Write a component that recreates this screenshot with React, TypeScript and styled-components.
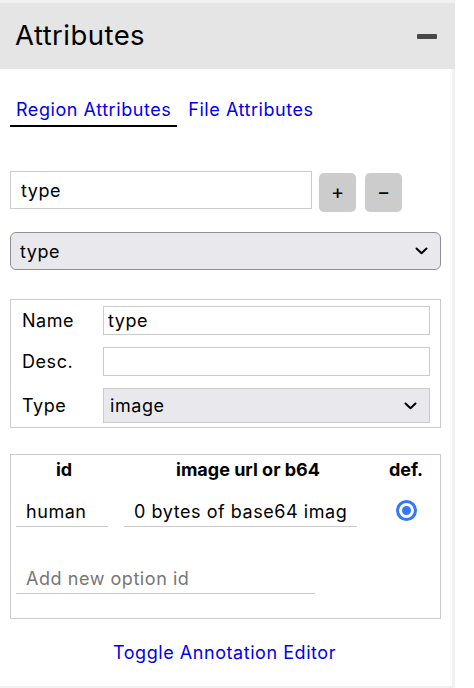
import React from "react";
import styled, { createGlobalStyle } from "styled-components";

const Global = createGlobalStyle`
  html, body { margin: 0; padding: 0; background: #fff; }
  body { font-family: Inter, "Liberation Sans", Arial, sans-serif; color: #000; letter-spacing: 0.55px; }
  * { box-sizing: border-box; }
`;

const fieldFont = `
  font: 18px Inter, "Liberation Sans", Arial, sans-serif;
  letter-spacing: 0.55px;
`;

const Panel = styled.div`
  width: 455px;
  height: 688px;
  background: #f1f1f1;
  padding-top: 3px;
  padding-bottom: 2px;
  display: flex;
  flex-direction: column;
`;

const Header = styled.div`
  height: 66px;
  flex: none;
  background: #e5e5e5;
  display: flex;
  align-items: center;
  justify-content: space-between;
  padding: 0 18px 0 15px;
`;

const Title = styled.h2`
  margin: 0;
  font-size: 27.5px;
  font-weight: 400;
  line-height: 1;
  letter-spacing: 0.45px;
`;

const Collapse = styled.button`
  width: 20px;
  height: 5px;
  padding: 0;
  border: 0;
  border-radius: 1px;
  background: #474747;
`;

const Body = styled.div`
  flex: 1;
  margin-right: 3px;
  background: #fff;
  padding: 0 11px 0 10px;
  display: flex;
  flex-direction: column;
`;

const Tabs = styled.div`
  margin-top: 30px;
  display: flex;
  gap: 5px;
`;

const Tab = styled.a<{ $active?: boolean }>`
  display: block;
  padding: 0 6px 4px;
  font-size: 18px;
  line-height: 22px;
  color: #0000ee;
  text-decoration: none;
  border-bottom: 2px solid ${(p) => (p.$active ? "#000" : "transparent")};
`;

const NewRow = styled.div`
  margin-top: 44px;
  display: flex;
  align-items: flex-start;
`;

const TextInput = styled.input<{ $w?: number; $h?: number; $pad?: number }>`
  width: ${(p) => (p.$w ? `${p.$w}px` : "100%")};
  height: ${(p) => p.$h ?? 38}px;
  border: 1px solid #cccccc;
  border-radius: 0;
  padding: 0 ${(p) => p.$pad ?? 10}px;
  ${fieldFont}
  color: #000;
  background: #fff;
  outline: none;
`;

const SmallButton = styled.button<{ $gap: number }>`
  width: 37px;
  height: 39px;
  margin-top: 2px;
  margin-left: ${(p) => p.$gap}px;
  border: 0;
  border-radius: 5px;
  background: #cccccc;
  font: 20px Inter, "Liberation Sans", Arial, sans-serif;
  color: #000;
  display: flex;
  align-items: center;
  justify-content: center;
  padding: 0 0 2px;
`;

const SelectBox = styled.div<{ $rounded?: boolean; $h: number; $pad: number }>`
  height: ${(p) => p.$h}px;
  display: flex;
  align-items: center;
  justify-content: space-between;
  padding: 0 12px 0 ${(p) => p.$pad}px;
  background: #e9e9ed;
  border: 1px solid ${(p) => (p.$rounded ? "#8f8f96" : "#cccccc")};
  border-radius: ${(p) => (p.$rounded ? "6px" : "0")};
  font-size: 18px;
`;

const AttrSelect = styled(SelectBox)`
  margin-top: 20px;
`;

const Chevron = () => (
  <svg width="13" height="8" viewBox="0 0 13 8" fill="none">
    <polyline points="1.5,1.5 6.5,6.2 11.5,1.5" stroke="#000" strokeWidth="2" strokeLinecap="round" strokeLinejoin="round" />
  </svg>
);

const AttrBox = styled.div`
  margin-top: 29px;
  height: 129px;
  border: 1px solid #cccccc;
  padding: 6px 10px 0 11px;
  display: grid;
  grid-template-columns: 81px 1fr;
  grid-template-rows: 29px 29px 35px;
  row-gap: 12px;
  align-items: center;
`;

const Label = styled.label`
  font-size: 18px;
`;

const OptionsBox = styled.div`
  margin-top: 26px;
  height: 165px;
  border: 1px solid #cccccc;
  padding: 4px 0 0 5px;
  display: grid;
  grid-template-columns: 108px 248px 1fr;
  grid-template-rows: 22px 31px 31px;
  row-gap: 15px;
  align-content: start;
`;

const ColHead = styled.div<{ $pr?: number }>`
  font-size: 18px;
  font-weight: 700;
  line-height: 22px;
  letter-spacing: 0;
  text-align: center;
  padding-right: ${(p) => p.$pr ?? 0}px;
`;

const LineInput = styled.input<{ $w: number }>`
  width: ${(p) => p.$w}px;
  height: 31px;
  border: 0;
  border-bottom: 1px solid #cccccc;
  border-radius: 0;
  padding: 0 10px;
  ${fieldFont}
  color: #000;
  background: transparent;
  outline: none;
  &::placeholder { color: #767676; }
`;

const NewOption = styled(LineInput)`
  grid-column: 1 / span 3;
  margin-top: 21px;
`;

const RadioCell = styled.div`
  display: flex;
  align-items: center;
  justify-content: center;
  padding-bottom: 2px;
`;

const Radio = styled.span`
  width: 21px;
  height: 21px;
  border-radius: 50%;
  border: 3.5px solid #3478f6;
  display: flex;
  align-items: center;
  justify-content: center;
  &::after {
    content: "";
    width: 9px;
    height: 9px;
    border-radius: 50%;
    background: #3478f6;
  }
`;

const ToggleLink = styled.a`
  margin-top: 23px;
  align-self: center;
  font-size: 18px;
  line-height: 22px;
  color: #0000ee;
  text-decoration: none;
  padding-right: 2px;
`;

export default function App() {
  return (
    <>
      <Global />
      <Panel>
        <Header>
          <Title>Attributes</Title>
          <Collapse aria-label="collapse" />
        </Header>
        <Body>
          <Tabs>
            <Tab $active>Region Attributes</Tab>
            <Tab>File Attributes</Tab>
          </Tabs>
          <NewRow>
            <TextInput $w={302} value="type" readOnly />
            <SmallButton $gap={7}>+</SmallButton>
            <SmallButton $gap={9}>−</SmallButton>
          </NewRow>
          <AttrSelect $rounded $h={38} $pad={9}>
            <span>type</span>
            <Chevron />
          </AttrSelect>
          <AttrBox>
            <Label>Name</Label>
            <TextInput $h={29} $pad={4} value="type" readOnly />
            <Label>Desc.</Label>
            <TextInput $h={29} $pad={4} value="" readOnly />
            <Label>Type</Label>
            <SelectBox $h={35} $pad={6}>
              <span>image</span>
              <Chevron />
            </SelectBox>
          </AttrBox>
          <OptionsBox>
            <ColHead $pr={12}>id</ColHead>
            <ColHead>image url or b64</ColHead>
            <ColHead>def.</ColHead>
            <LineInput $w={92} value="human" readOnly />
            <LineInput $w={233} value="0 bytes of base64 image data" readOnly />
            <RadioCell>
              <Radio />
            </RadioCell>
            <NewOption $w={299} placeholder="Add new option id" />
          </OptionsBox>
          <ToggleLink>Toggle Annotation Editor</ToggleLink>
        </Body>
      </Panel>
    </>
  );
}
